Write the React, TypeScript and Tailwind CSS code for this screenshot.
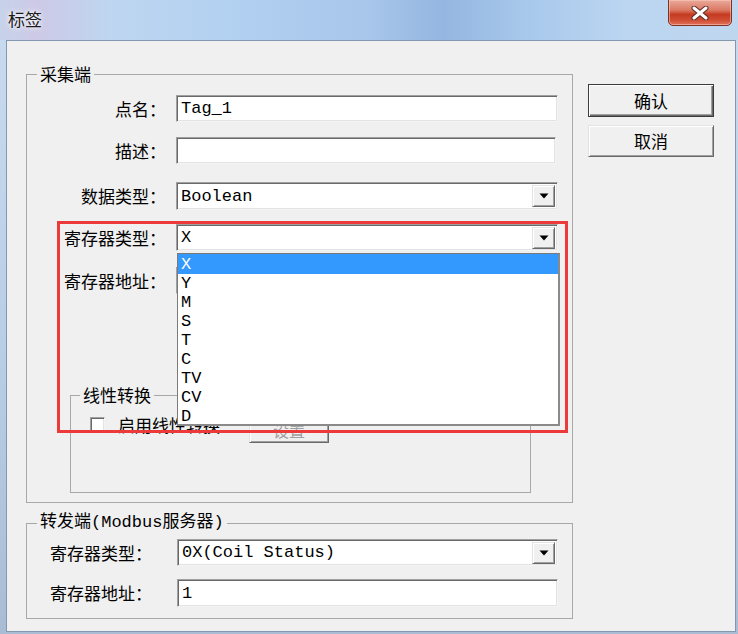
import React from "react";

const CJK = "font-['Noto_Sans_CJK_SC',sans-serif]";
const MONO = "font-['Liberation_Mono','Noto_Sans_CJK_SC',monospace]";

const sunken =
  "bg-white border border-t-[#a0a0a0] border-l-[#a0a0a0] border-b-[#f4f4f4] border-r-[#f4f4f4] shadow-[inset_1px_1px_0_#696969,inset_-1px_-1px_0_#e3e3e3]";
const raised =
  "bg-[#f0f0f0] border border-t-[#e3e3e3] border-l-[#e3e3e3] border-b-[#696969] border-r-[#696969] shadow-[inset_1px_1px_0_#ffffff,inset_-1px_-1px_0_#a0a0a0]";

function TextBox({ value, w, h }: { value?: string; w: number; h: number }) {
  return (
    <div
      className={`${sunken} ${MONO} text-[17px] leading-none text-black flex items-center pl-[4px]`}
      style={{ width: w, height: h }}
    >
      {value}
    </div>
  );
}

function Combo({ value, w, h }: { value: string; w: number; h: number }) {
  return (
    <div
      className={`${sunken} ${MONO} text-[17px] leading-none text-black flex items-center pl-[4px] pr-[2px]`}
      style={{ width: w, height: h }}
    >
      <span className="flex-1">{value}</span>
      <div className={`${raised} w-[23px] h-[22px] flex items-center justify-center`}>
        <svg width="10" height="6" viewBox="0 0 10 6">
          <path d="M0.5 0.5 L9.5 0.5 L5 5.5 Z" fill="#000" />
        </svg>
      </div>
    </div>
  );
}

function Row({
  label,
  children,
  mt,
}: {
  label: string;
  children: React.ReactNode;
  mt: string;
}) {
  return (
    <div className={`flex items-center ${mt}`}>
      <div className={`w-[139px] text-right ${CJK} text-[17px] leading-[20px] text-black`}>{label}</div>
      <div className="ml-[10px]">{children}</div>
    </div>
  );
}

export default function App() {
  return (
    <div className="w-[738px] h-[634px] relative overflow-hidden bg-[linear-gradient(to_bottom,#c9dbef,#b7cde6_60%,#a9bcd3)]">
      {/* title bar */}
      <div className="h-[40px] relative bg-[linear-gradient(to_right,#c7d3ea_0%,#cdc9e6_5%,#bed6f0_15%,#b3d1f1_30%,#a8c6ea_50%,#94b6e0_60%,#a9c9ec_72%,#bcd6f1_85%,#bfd6ef_100%)]">
        <div
          className={`absolute left-[8px] top-[8px] ${CJK} text-[17px] leading-[22px] text-[#1b1b1b] [text-shadow:0_0_6px_#ffffff,0_0_3px_#ffffff]`}
        >
          标签
        </div>
        <div className="absolute right-[6px] top-[-1px] w-[64px] h-[27px] rounded-b-[5px] border border-[#7d3227] bg-[linear-gradient(to_bottom,#e9a99a_0%,#db7a65_40%,#c53b22_58%,#cf4d33_80%,#e0735a_100%)] shadow-[inset_0_0_0_1px_rgba(255,210,200,0.5)] flex items-center justify-center">
          <svg width="18" height="14" viewBox="0 0 18 14">
            <path d="M3 2 L15 12 M15 2 L3 12" stroke="#5a2a24" strokeWidth="5" strokeLinecap="round" />
            <path d="M3 2 L15 12 M15 2 L3 12" stroke="#ffffff" strokeWidth="3" strokeLinecap="round" />
          </svg>
        </div>
      </div>

      {/* client area */}
      <div className="ml-[6px] w-[730px] h-[592px] bg-[#f0f0f0] border border-[#8497b0] flex pl-[19px] pt-[23px]">
        {/* left column */}
        <div className="w-[547px] flex flex-col">
          <fieldset className="w-[547px] h-[439px] border border-[#a8a8a8] m-0 p-0">
            <legend className={`ml-[10px] px-[3px] ${CJK} text-[17px] leading-[20px] text-black`}>采集端</legend>
            <Row label="点名：" mt="mt-[11px]">
              <TextBox value="Tag_1" w={382} h={27} />
            </Row>
            <Row label="描述：" mt="mt-[15px]">
              <TextBox w={380} h={27} />
            </Row>
            <Row label="数据类型：" mt="mt-[18px]">
              <Combo value="Boolean" w={382} h={28} />
            </Row>
            <Row label="寄存器类型：" mt="mt-[14px]">
              <Combo value="X" w={382} h={27} />
            </Row>
            <Row label="寄存器地址：" mt="mt-[16px]">
              <TextBox w={382} h={27} />
            </Row>

            <fieldset className="ml-[43px] mt-[91px] w-[461px] h-[108px] border border-[#a8a8a8] p-0">
              <legend className={`ml-[9px] px-[3px] ${CJK} text-[17px] leading-[20px] text-black`}>线性转换</legend>
              <div className="flex items-start mt-[12px] ml-[19px]">
                <div className={`${sunken} w-[15px] h-[15px]`} />
                <div className={`ml-[13px] mt-[-2px] ${CJK} text-[17px] leading-[20px] text-black`}>启用线性转换</div>
                <div
                  className={`${raised} ml-[29px] w-[80px] h-[26px] flex items-center justify-center ${CJK} text-[16px] text-[#a0a0a0]`}
                >
                  设置
                </div>
              </div>
            </fieldset>
          </fieldset>

          <fieldset className="mt-[10px] w-[547px] h-[106px] border border-[#a8a8a8] p-0">
            <legend className={`ml-[10px] px-[3px] ${MONO} text-[17px] leading-[20px] text-black`}>转发端(Modbus服务器)</legend>
            <div className="flex items-center mt-[6px] ml-[23px]">
              <div className={`w-[102px] ${CJK} text-[17px] leading-[20px] text-black`}>寄存器类型：</div>
              <div className="ml-[25px]">
                <Combo value="0X(Coil Status)" w={381} h={27} />
              </div>
            </div>
            <div className="flex items-center mt-[13px] ml-[23px]">
              <div className={`w-[102px] ${CJK} text-[17px] leading-[20px] text-black`}>寄存器地址：</div>
              <div className="ml-[25px]">
                <TextBox value="1" w={381} h={28} />
              </div>
            </div>
          </fieldset>
        </div>

        {/* right column */}
        <div className="ml-[15px] flex flex-col">
          <div
            className={`mt-[20px] w-[126px] h-[33px] border border-[#3c3c3c] bg-[#f0f0f0] shadow-[inset_1px_1px_0_#ffffff,inset_-1px_-1px_0_#696969,inset_-2px_-2px_0_#a0a0a0] flex items-center justify-center ${CJK} text-[17px] text-black`}
          >
            确认
          </div>
          <div className={`${raised} mt-[8px] w-[126px] h-[32px] flex items-center justify-center ${CJK} text-[17px] text-black`}>
            取消
          </div>
        </div>
      </div>

      {/* dropdown list overlay */}
      <div className="absolute left-[177px] top-[253px] w-[383px] h-[173px] bg-white border border-[#7a7a7a] border-r-2 border-b-2 border-r-[#8a8a8a] border-b-[#8a8a8a]">
        {["X", "Y", "M", "S", "T", "C", "TV", "CV", "D"].map((it, i) => (
          <div
            key={it}
            className={`h-[19px] pl-[3px] ${MONO} text-[17px] leading-[19px] ${
              i === 0 ? "bg-[#3399ff] text-white h-[20px] leading-[22px]" : "text-black"
            }`}
          >
            {it}
          </div>
        ))}
      </div>

      {/* red highlight */}
      <div className="absolute left-[57px] top-[221px] w-[511px] h-[212px] border-[3px] border-[#ec3a3a]" />
    </div>
  );
}
